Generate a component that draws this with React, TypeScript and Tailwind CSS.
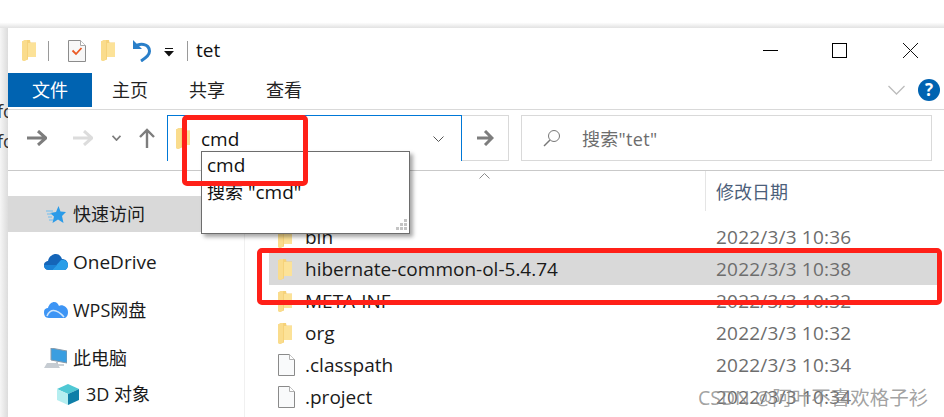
const font = { fontFamily: '"Open Sans", "Noto Sans CJK SC", sans-serif' }

function Folder({ className = "" }: { className?: string }) {
  return (
    <svg viewBox="0 0 14 21" className={className}>
      <path d="M0 1.5 L3 0 H8 L8.5 2.5 H14 V17 H6 V19.5 L2 21 L0 20 Z" fill="#f6d27a" />
      <path d="M6 3 H14 V17 H6 Z" fill="#fce298" />
      <path d="M0 1.5 L3 0 H5 V19.5 L2 21 L0 20 Z" fill="#fadc8c" />
    </svg>
  )
}

function FileIcon() {
  return (
    <svg viewBox="0 0 17 22" className="h-[22px] w-[17px]">
      <path d="M.5.5 H11.5 L16.5 5.5 V21.5 H.5 Z" fill="#f9fafb" stroke="#8a8a8a" />
      <path d="M11.5.5 V5.5 H16.5" fill="#fff" stroke="#b0b0b0" />
    </svg>
  )
}

const files = [
  { name: "bin", date: "2022/3/3 10:36", folder: true },
  { name: "hibernate-common-ol-5.4.74", date: "2022/3/3 10:38", folder: true, selected: true },
  { name: "META-INF", date: "2022/3/3 10:32", folder: true },
  { name: "org", date: "2022/3/3 10:32", folder: true },
  { name: ".classpath", date: "2022/3/3 10:34", folder: false },
  { name: ".project", date: "2022/3/3 10:34", folder: false },
]

function NavItem({ icon, label, active, indent, latin }: { icon: React.ReactNode; label: string; active?: boolean; indent?: boolean; latin?: boolean }) {
  return (
    <div className={`flex h-9 w-[194px] shrink-0 items-center ${active ? "bg-[#d9d9d9]" : ""} ${indent ? "pl-[49px]" : "pl-[36px]"}`}>
      <div className="flex w-[29px] shrink-0 items-center">{icon}</div>
      <span className={`whitespace-nowrap text-[#1a1a1a] ${latin ? "text-[19px]" : "text-[18px]"}`}>{label}</span>
    </div>
  )
}

export default function App() {
  return (
    <div style={font} className="relative flex h-[417px] w-[944px] flex-col overflow-hidden bg-white">
      <div className="h-[28px] shrink-0 bg-gradient-to-b from-white from-80% to-[#e2e2e2]" />

      <div className="flex min-h-0 flex-1">
        {/* what shows of the window behind */}
        <div className="flex w-[8px] shrink-0 flex-col overflow-hidden bg-gradient-to-r from-[#f6f6f6] to-[#dcdcdc] pt-[68px] text-[18px] leading-[30px] text-[#333]">
          <span className="-ml-[3px]">fo</span>
          <span className="-ml-[3px]">fo</span>
        </div>

        <div className="flex min-w-0 flex-1 flex-col">
          {/* title bar */}
          <div className="flex h-[45px] shrink-0 items-center">
            <Folder className="ml-[14px] h-[21px] w-[14px]" />
            <div className="ml-[12px] h-[20px] w-px bg-[#9a9a9a]" />
            <svg viewBox="0 0 18 22" className="ml-[19px] h-[22px] w-[18px]">
              <path d="M.5.5 H12.5 L17.5 5.5 V21.5 H.5 Z" fill="#f7f7f7" stroke="#8c8c8c" />
              <path d="M12.5.5 V5.5 H17.5" fill="#fff" stroke="#a8a8a8" />
              <path d="M4.5 10.5 L8 14 L13.5 8" fill="none" stroke="#ea5a24" strokeWidth="1.8" />
            </svg>
            <Folder className="ml-[15px] h-[21px] w-[14px]" />
            <svg viewBox="0 0 20 22" className="ml-[17px] h-[22px] w-[20px]">
              <path d="M1 0 V9 H10 Z" fill="#2a7fc9" />
              <path d="M3 7 C7 3 17 3 17.5 11 C17.8 15 14 18 9 21" fill="none" stroke="#2a7fc9" strokeWidth="3" />
            </svg>
            <svg viewBox="0 0 10 9" className="ml-[12px] mt-[4px] h-[9px] w-[10px]">
              <path d="M1 0 H9 V1 H1 Z M0 3 H10 L5 8.5 Z" fill="#111" />
            </svg>
            <div className="ml-[13px] h-[20px] w-px bg-[#9a9a9a]" />
            <span className="ml-[8px] text-[19px] text-[#111]">tet</span>

            <div className="ml-auto flex items-center pr-[26px]">
              <div className="h-px w-[15px] bg-black" />
              <div className="ml-[54px] h-[15px] w-[15px] border border-black" />
              <svg viewBox="0 0 15 15" className="ml-[56px] h-[15px] w-[15px]">
                <path d="M0 0 L15 15 M15 0 L0 15" stroke="#111" strokeWidth="1" />
              </svg>
            </div>
          </div>

          {/* ribbon tabs */}
          <div className="flex h-[37px] shrink-0 items-start border-b border-[#d9d9d9]">
            <div className="flex h-[34px] w-[84px] items-center justify-center bg-[#0063b1] text-[18px] text-white">文件</div>
            <span className="ml-[20px] flex h-[34px] items-center text-[18px] text-[#222]">主页</span>
            <span className="ml-[41px] flex h-[34px] items-center text-[18px] text-[#222]">共享</span>
            <span className="ml-[41px] flex h-[34px] items-center text-[18px] text-[#222]">查看</span>
            <div className="ml-auto flex h-[34px] items-center pr-[4px]">
              <svg viewBox="0 0 17 10" className="h-[10px] w-[17px]">
                <path d="M.5 1 L8.5 9 L16.5 1" fill="none" stroke="#bcbcbc" strokeWidth="1.3" />
              </svg>
              <div className="ml-[13px] flex h-[22px] w-[22px] items-center justify-center rounded-full bg-[#0063b1] text-[17px] font-bold text-white">?</div>
            </div>
          </div>

          {/* address bar */}
          <div className="flex h-[61px] shrink-0 items-start border-b border-[#c9c9c9] pt-[5px]">
            <div className="flex h-[46px] w-[159px] shrink-0 items-center">
              <svg viewBox="0 0 20 16" className="ml-[19px] h-[16px] w-[20px]">
                <path d="M0 8 H19 M11 1 L19 8 L11 15" fill="none" stroke="#7d7d7d" strokeWidth="3" />
              </svg>
              <svg viewBox="0 0 20 16" className="ml-[26px] h-[16px] w-[20px]">
                <path d="M0 8 H19 M11 1 L19 8 L11 15" fill="none" stroke="#dcdcdc" strokeWidth="3" />
              </svg>
              <svg viewBox="0 0 9 6" className="ml-[19px] h-[6px] w-[9px]">
                <path d="M.5 .8 L4.5 5 L8.5 .8" fill="none" stroke="#7d7d7d" strokeWidth="1.8" />
              </svg>
              <svg viewBox="0 0 16 20" className="ml-[18px] h-[20px] w-[16px]">
                <path d="M8 20 V2 M1 9 L8 2 L15 9" fill="none" stroke="#7d7d7d" strokeWidth="2.4" />
              </svg>
            </div>
            <div className="flex h-[46px] w-[295px] shrink-0 items-center border border-b-0 border-[#0078d7] bg-white pr-[17px]">
              <Folder className="ml-[8px] h-[21px] w-[14px]" />
              <span className="ml-[11px] mt-[2px] text-[19px] text-[#111]">cmd</span>
              <svg viewBox="0 0 11 6" className="ml-auto h-[6px] w-[11px]">
                <path d="M.5 .5 L5.5 5.5 L10.5 .5" fill="none" stroke="#555" />
              </svg>
            </div>
            <div className="flex h-[46px] w-[47px] shrink-0 items-center justify-center border border-l-0 border-[#d9d9d9]">
              <svg viewBox="0 0 17 16" className="h-[16px] w-[17px]">
                <path d="M0 8 H15 M8 1 L15 8 L8 15" fill="none" stroke="#7d7d7d" strokeWidth="3" />
              </svg>
            </div>
            <div className="ml-[12px] flex h-[46px] w-[411px] shrink-0 items-center border border-[#d9d9d9] pl-[21px]">
              <svg viewBox="0 0 18 18" className="h-[18px] w-[18px]">
                <circle cx="11" cy="7" r="5.5" fill="none" stroke="#777" />
                <path d="M7 11 L1 17" stroke="#777" strokeWidth="1.4" />
              </svg>
              <span className="ml-[21px] mt-[2px] text-[18px] tracking-[0.3px] text-[#6d6d6d]">搜索"tet"</span>
            </div>
          </div>

          {/* body */}
          <div className="flex min-h-0 flex-1">
            <aside className="flex w-[237px] shrink-0 flex-col border-r border-[#f0f0f0] pt-[25px]">
              <NavItem
                active
                icon={
                  <svg viewBox="0 0 20 17" className="ml-[2px] h-[17px] w-[20px]">
                    <path d="M12.5 0 L14.5 5.5 L20 6 L16 10 L17.5 17 L12 13.5 L6.5 17 L8 10.5 L4 7 L10 6 Z" fill="#2b9be8" />
                    <path d="M0 5 H7 M1 8 H6 M2 11 H6 M3 14 H7" stroke="#6fbdf0" strokeWidth="1" />
                  </svg>
                }
                label="快速访问"
              />
              <div className="mt-[12px]">
                <NavItem
                  latin
                  icon={
                    <svg viewBox="0 0 24 16" className="h-[16px] w-[24px]">
                      <path d="M5 16 C1 16 0 13 0 11 C0 8 3 7 4 7 C5 2 9 0 12 0 C15 0 17 2 18 5 C21 5 24 7 24 11 C24 14 22 16 20 16 Z" fill="#1565b8" />
                      <path d="M8 16 L17 6 C21 5 24 8 24 11 C24 14 22 16 20 16 Z" fill="#2a9ee8" />
                      <path d="M5 16 C1 16 0 13 0 11 H13 L8 16 Z" fill="#1b82d6" />
                    </svg>
                  }
                  label="OneDrive"
                />
              </div>
              <div className="mt-[12px]">
                <NavItem
                  icon={
                    <svg viewBox="0 0 24 16" className="h-[16px] w-[24px]">
                      <path d="M5 16 C1 16 0 13 0 10 C0 7 2 6 4 6 C5 2 8 0 10 0 C13 0 14 2 15 4 C17 2 24 4 24 10 C24 14 22 16 20 16 Z" fill="#3d95f5" />
                      <path d="M3 14 C6 7 12 6 20 15" fill="none" stroke="#cfe6fc" strokeWidth="1.6" />
                    </svg>
                  }
                  label="WPS网盘"
                />
              </div>
              <div className="mt-[12px]">
                <NavItem
                  icon={
                    <svg viewBox="0 0 23 20" className="h-[20px] w-[23px]">
                      <path d="M7 0 L23 3 V15 L7 12 Z" fill="#3a9ee0" stroke="#8a9aa8" strokeWidth="1" />
                      <path d="M13 14 V17 H20" fill="none" stroke="#9aa4ac" strokeWidth="1.2" />
                      <path d="M0 20 L3 15 H13 L16 20 Z" fill="#c6ccd2" />
                    </svg>
                  }
                  label="此电脑"
                />
              </div>
              <NavItem
                indent
                icon={
                  <svg viewBox="0 0 22 21" className="h-[21px] w-[22px]">
                    <path d="M11 0 L22 5 L11 10 L0 5 Z" fill="#4fc8d4" />
                    <path d="M0 5 L11 10 V21 L0 16 Z" fill="#b5eef0" />
                    <path d="M22 5 L11 10 V21 L22 16 Z" fill="#0f7fa8" />
                  </svg>
                }
                label="3D 对象"
              />
            </aside>

            <main className="min-w-0 flex-1 pl-[24px]">
              <div className="flex h-[50px] items-start">
                <div className="relative h-[40px] w-[437px] shrink-0 border-r border-[#e5e5e5]">
                  <svg viewBox="0 0 11 6" className="absolute left-[210px] top-[2px] h-[6px] w-[11px]">
                    <path d="M.5 5.5 L5.5 .5 L10.5 5.5" fill="none" stroke="#8a8a8a" />
                  </svg>
                </div>
                <span className="ml-[10px] mt-[9px] text-[18px] leading-[24px] text-[#4c607a]">修改日期</span>
              </div>
              {files.map((f) => (
                <div key={f.name} className={`flex h-[32px] w-[671px] items-center pl-[9px] ${f.selected ? "bg-[#d9d9d9]" : ""}`}>
                  <div className="flex w-[27px] shrink-0 items-center">
                    {f.folder ? <Folder className="h-[21px] w-[14px]" /> : <FileIcon />}
                  </div>
                  <span className="w-[411px] shrink-0 whitespace-nowrap text-[19px] text-[#1a1a1a]">{f.name}</span>
                  <span className="whitespace-nowrap text-[19px] tracking-[0.2px] text-[#6d6d6d]">{f.date}</span>
                </div>
              ))}
            </main>
          </div>
        </div>
      </div>

      {/* autocomplete popup */}
      <div className="absolute left-[201px] top-[151px] h-[83px] w-[209px] border border-[#6d6d6d] bg-white pl-[5px] text-[19px] leading-[27px] text-[#111] shadow-[3px_3px_4px_rgba(0,0,0,0.35)]">
        <div>cmd</div>
        <div>
          <span className="text-[18px]">搜索</span> "cmd"
        </div>
        <svg viewBox="0 0 11 11" className="absolute bottom-[3px] right-[2px] h-[11px] w-[11px]">
          <path d="M8 0 H11 V3 H8 Z M4 4 H7 V7 H4 Z M8 4 H11 V7 H8 Z M0 8 H3 V11 H0 Z M4 8 H7 V11 H4 Z M8 8 H11 V11 H8 Z" fill="#c4c4c4" />
        </svg>
      </div>

      {/* red annotation boxes */}
      <div className="absolute left-[182px] top-[115px] h-[71px] w-[126px] rounded-[5px] border-[5px] border-[#ff2018]" />
      <div className="absolute left-[257px] top-[248px] h-[57px] w-[685px] rounded-[5px] border-[5px] border-[#ff2018]" />

      <div className="absolute left-[698px] top-[383px] whitespace-nowrap text-[19.5px] text-[#8a8a8a]/80">CSDN @阿叶不喜欢格子衫</div>
    </div>
  )
}
